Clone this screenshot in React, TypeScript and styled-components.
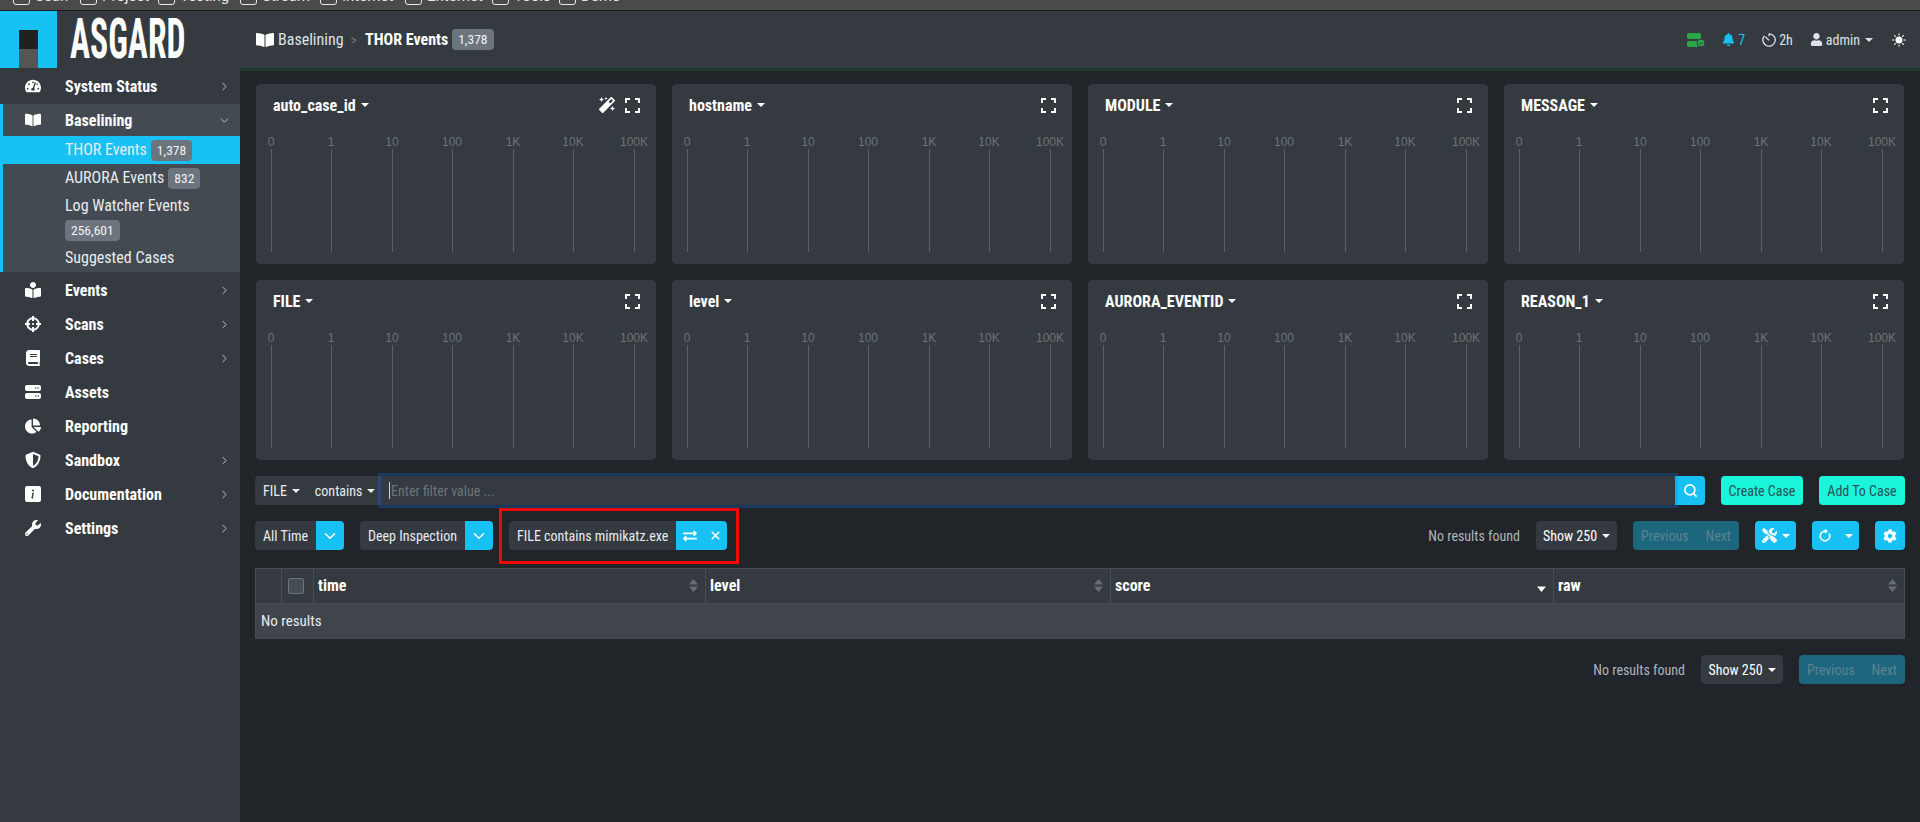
import React from "react";
import styled, {createGlobalStyle} from "styled-components";
import {
    FaBookOpen, FaBookReader, FaBell, FaBook, FaChartPie, FaCog, FaCrosshairs, FaExchangeAlt, FaMagic,
    FaShieldAlt, FaTachometerAlt, FaTools, FaUser, FaWrench,
} from "react-icons/fa";
import {FaServer} from "react-icons/fa6";
import {BsArrowClockwise, BsInfoSquareFill, BsSunFill} from "react-icons/bs";
import {FiChevronDown, FiChevronRight, FiSearch, FiX} from "react-icons/fi";

const GlobalStyle = createGlobalStyle`
    html, body { margin: 0; height: 100%; background: #212529; }
    body {
        font-family: "Roboto Condensed", "Roboto", "Liberation Sans", sans-serif;
        font-size: 16px;
        color: #dee2e6;
        overflow: hidden;
    }
    * { box-sizing: border-box; }
`;

const CYAN = '#17c1f4';
const PANEL = '#343a40';

const Shell = styled.div`
    display: flex;
    flex-direction: column;
    height: 822px;
`;

const TopStrip = styled.div`
    display: flex;
    height: 11px;
    flex-shrink: 0;
    padding-left: 13px;
    background: #4a4a4a;
    border-bottom: 1px solid #1c1c1c;
    overflow: hidden;
    color: #e8e8e8;
    font: 15px/16px "Roboto", sans-serif;
`;

const StripItem = styled.div<{$width: number}>`
    display: flex;
    gap: 5px;
    width: ${p => p.$width}px;
    margin-top: -12px;
    flex-shrink: 0;

    &::before {
        content: "";
        width: 15px;
        height: 15px;
        border: 1px solid #e8e8e8;
        border-radius: 3px;
    }
`;

const Frame = styled.div`
    display: flex;
    flex: 1;
    min-height: 0;
`;

const Sidebar = styled.aside`
    width: 240px;
    flex-shrink: 0;
    background: ${PANEL};
`;

const Brand = styled.div`
    display: flex;
    height: 57px;
    overflow: hidden;
`;

const LogoMark = styled.div`
    display: flex;
    flex-direction: column;
    justify-content: flex-end;
    align-items: center;
    width: 57px;
    flex-shrink: 0;
    background: ${CYAN};
`;

const LogoDark = styled.div`
    width: 19px;
    height: 19px;
    background: #212121;
`;

const LogoGrey = styled(LogoDark)`
    background: #555;
`;

const BrandName = styled.div`
    margin-left: 13px;
    color: #fff;
    font-size: 56px;
    line-height: 57px;
    font-weight: 700;
    transform: scaleX(0.6);
    transform-origin: left center;
`;

const NavRow = styled.div<{$open?: boolean; $first?: boolean}>`
    display: flex;
    align-items: center;
    height: ${p => p.$open ? 32 : p.$first ? 36 : 34}px;
    padding-left: ${p => p.$open ? 22 : 25}px;
    color: #fff;
    font-weight: 700;
`;

const NavIcon = styled.span`
    display: flex;
    justify-content: center;
    width: 16px;
    margin-right: 24px;
    font-size: 16px;
`;

const NavArrow = styled.span`
    display: flex;
    margin-left: auto;
    margin-right: 9px;
    color: #ced4da;
    font-size: 13px;

    svg { stroke-width: 1.6; }
`;

const NavGroup = styled.div`
    height: 168px;
    margin-bottom: 1px;
    background: #444a51;
    border-left: 3px solid ${CYAN};
`;

const SubItem = styled.div<{$active?: boolean; $stacked?: boolean}>`
    display: flex;
    flex-wrap: wrap;
    align-items: center;
    align-content: flex-start;
    column-gap: 4px;
    min-height: 28px;
    margin-left: ${p => p.$active ? -3 : 0}px;
    padding-left: ${p => p.$active ? 65 : 62}px;
    padding-bottom: ${p => p.$stacked ? 3 : 0}px;
    background: ${p => p.$active ? CYAN : 'transparent'};
    color: #e9ecef;
    line-height: 28px;
`;

const Badge = styled.span`
    display: inline-block;
    padding: 0 6px;
    height: 21px;
    background: #6c757d;
    border-radius: 4px;
    color: #f1f3f5;
    font-size: 13.5px;
    line-height: 21px;
`;

const Content = styled.div`
    flex: 1;
    min-width: 0;
`;

const Header = styled.header`
    display: flex;
    align-items: center;
    height: 60px;
    padding: 0 14px 0 16px;
    background: ${PANEL};
    border-bottom: 3px solid #1d3a2a;
`;

const Crumb = styled.span`
    display: flex;
    align-items: center;
    gap: 4px;
    color: #dee2e6;

    svg { font-size: 18px; color: #fff; }
`;

const CrumbSep = styled.span`
    margin: 0 8px 0 7px;
    color: #6c757d;
    font-size: 14px;
`;

const CrumbCurrent = styled.span`
    margin-right: 4px;
    color: #fff;
    font-weight: 700;
`;

const Status = styled.div`
    display: flex;
    align-items: center;
    margin-left: auto;
    font-size: 14px;
`;

const StatusItem = styled.span<{$color?: string; $gap: number}>`
    display: flex;
    align-items: center;
    gap: 3px;
    margin-right: ${p => p.$gap}px;
    color: ${p => p.$color || '#dee2e6'};
`;

const StatusLabel = styled.span`
    display: inline-flex;
    align-items: center;
`;

const Main = styled.main`
    padding: 13px 15px 0;
`;

const CardGrid = styled.div`
    display: grid;
    grid-template-columns: repeat(4, 400px);
    gap: 16px;
    margin: 0 1px;
`;

const Card = styled.section`
    height: 180px;
    background: ${PANEL};
    border-radius: 4px;
`;

const CardHead = styled.div`
    display: flex;
    align-items: center;
    gap: 10px;
    height: 42px;
    padding: 0 16px 0 17px;
    color: #fff;
    font-weight: 700;
`;

const CardTitle = styled.span`
    display: flex;
    align-items: center;
    margin-right: auto;
`;

const Caret = styled.span`
    display: inline-block;
    margin-left: 5px;
    border-top: 4.5px solid currentColor;
    border-left: 4.5px solid transparent;
    border-right: 4.5px solid transparent;
`;

const Chart = styled.svg`
    display: block;
    width: 400px;
    height: 138px;
`;

const FilterBar = styled.div`
    display: flex;
    align-items: stretch;
    height: 29px;
    margin-top: 16px;
    font-size: 14px;
`;

const FieldPicker = styled.div`
    display: flex;
    align-items: center;
    gap: 15px;
    width: 126px;
    padding-left: 8px;
    background: ${PANEL};
    border-radius: 4px 0 0 4px;
`;

const PickerLabel = styled.span`
    display: flex;
    align-items: center;
    color: #e9ecef;
`;

const FilterInputWrap = styled.div`
    display: flex;
    align-items: center;
    flex: 1;
    padding-left: 8px;
    background: ${PANEL};
    box-shadow: 0 0 0 3px rgba(0, 123, 255, .25);
    position: relative;
    z-index: 1;
`;

const FilterInput = styled.input`
    width: 100%;
    height: 17px;
    padding: 0 0 0 1px;
    background: transparent;
    border: 0;
    border-left: 1px solid #ced4da;
    outline: none;
    color: #dee2e6;
    font: inherit;

    &::placeholder { color: #6c757d; }
`;

const Button = styled.button<{$width?: number; $bg?: string; $color?: string; $left?: number; $round?: string; $gap?: number}>`
    display: inline-flex;
    align-items: center;
    justify-content: center;
    gap: ${p => p.$gap || 0}px;
    width: ${p => p.$width ? `${p.$width}px` : 'auto'};
    height: 29px;
    margin-left: ${p => p.$left || 0}px;
    padding: 0;
    background: ${p => p.$bg || CYAN};
    border: 0;
    border-radius: ${p => p.$round || '4px'};
    color: ${p => p.$color || '#fff'};
    font: inherit;
    flex-shrink: 0;
`;

const ToolRow = styled.div`
    display: flex;
    align-items: center;
    height: 29px;
    margin-top: 16px;
    font-size: 14px;
`;

const Tag = styled.div<{$left?: number}>`
    display: flex;
    height: 29px;
    margin-left: ${p => p.$left || 0}px;
    position: relative;
`;

const TagLabel = styled.span<{$width: number}>`
    display: flex;
    align-items: center;
    width: ${p => p.$width}px;
    padding-left: 8px;
    background: ${PANEL};
    border-radius: 4px 0 0 4px;
    color: #e9ecef;
    white-space: nowrap;
`;

const Highlight = styled.div`
    position: absolute;
    left: -10px;
    right: -12px;
    top: -13px;
    bottom: -14px;
    border: 3px solid #f00a0a;
    pointer-events: none;
`;

const Pager = styled.div`
    display: flex;
    align-items: center;
    margin-left: auto;
`;

const ResultText = styled.span`
    margin-right: 16px;
    color: #adb5bd;
`;

const PageNav = styled.div`
    display: flex;
    align-items: center;
    justify-content: space-between;
    width: 106px;
    height: 29px;
    margin-left: 16px;
    padding: 0 8px;
    background: #1c677e;
    border-radius: 4px;
    color: #5d8290;
`;

const Table = styled.div`
    margin-top: 18px;
    border: 1px solid #474c53;
`;

const HeadRow = styled.div`
    display: grid;
    grid-template-columns: 25px 32px 392px 405px 443px 1fr;
    height: 35px;
    background: ${PANEL};
    border-bottom: 1px solid #474c53;
`;

const HeadCell = styled.div`
    display: flex;
    align-items: center;
    padding: 0 4px 1px;
    color: #fff;
    font-weight: 700;

    & + & { border-left: 1px solid #474c53; }
`;

const CheckCell = styled(HeadCell)`
    justify-content: center;
    padding: 0 4px 0 0;
`;

const CheckBox = styled.span`
    width: 16px;
    height: 16px;
    background: #484d54;
    border: 1px solid #6c757d;
    border-radius: 2px;
`;

const SortMark = styled.svg`
    width: 9px;
    height: 13px;
    margin-left: auto;
    margin-right: 3px;
`;

const EmptyRow = styled.div`
    display: flex;
    align-items: center;
    height: 34px;
    padding-left: 5px;
    background: #40454c;
    color: #e9ecef;
    font-size: 15px;
`;

const Expand = () => (
    <svg width="15" height="15" viewBox="0 0 15 15" fill="none" stroke="#fff" strokeWidth="2">
        <path d="M1 5V1h4M10 1h4v4M14 10v4h-4M5 14H1v-4"/>
    </svg>
);

const ServerOk = () => (
    <svg width="18" height="14" viewBox="0 0 18 14">
        <rect x="0" y="0" width="14" height="6" rx="1.5" fill="#28a745"/>
        <rect x="0" y="8" width="12" height="6" rx="1.5" fill="#28a745"/>
        <circle cx="14" cy="10" r="4" fill="#28a745" stroke={PANEL} strokeWidth="1"/>
        <path d="M12.2 10l1.3 1.3 2.3-2.4" fill="none" stroke={PANEL} strokeWidth="1"/>
    </svg>
);

const Timer = () => (
    <svg width="14" height="14" viewBox="0 0 14 14" fill="none" stroke="#e9ecef" strokeWidth="1.2">
        <path d="M7 .8a6.2 6.2 0 1 1-4.6 2.1"/>
        <path d="M3.2 3.6L7 7.4"/>
        <path d="M7 .8v2.4"/>
    </svg>
);

const Sort = ({active}: {active?: boolean}) => (
    <SortMark viewBox="0 0 9 13">
        {!active && <path d="M4.5 0L9 5.5H0z" fill="#666c73"/>}
        <path d="M0 7.5h9L4.5 13z" fill={active ? '#fff' : '#666c73'}/>
    </SortMark>
);

const upperNav = {label: 'System Status', icon: <FaTachometerAlt/>};

const lowerNav = [
    {label: 'Events', icon: <FaBookReader/>, arrow: true},
    {label: 'Scans', icon: <FaCrosshairs/>, arrow: true},
    {label: 'Cases', icon: <FaBook/>, arrow: true},
    {label: 'Assets', icon: <FaServer/>},
    {label: 'Reporting', icon: <FaChartPie/>},
    {label: 'Sandbox', icon: <FaShieldAlt/>, arrow: true},
    {label: 'Documentation', icon: <BsInfoSquareFill/>, arrow: true},
    {label: 'Settings', icon: <FaWrench/>, arrow: true},
];

const stripItems = [
    {label: 'Scan', width: 67},
    {label: 'Project', width: 78},
    {label: 'Testing', width: 82},
    {label: 'Stream', width: 80},
    {label: 'Internet', width: 85},
    {label: 'Enternet', width: 87},
    {label: 'Tools', width: 67},
    {label: 'Demo', width: 70},
];

const ticks = [
    {label: '0', x: 15},
    {label: '1', x: 75},
    {label: '10', x: 136},
    {label: '100', x: 196},
    {label: '1K', x: 257},
    {label: '10K', x: 317},
    {label: '100K', x: 378},
];

const cards = ['auto_case_id', 'hostname', 'MODULE', 'MESSAGE', 'FILE', 'level', 'AURORA_EVENTID', 'REASON_1'];

const App = () => {
    return (
        <Shell>
            <GlobalStyle/>
            <TopStrip>
                {stripItems.map(item => (
                    <StripItem key={item.label} $width={item.width}>{item.label}</StripItem>
                ))}
            </TopStrip>
            <Frame>
                <Sidebar>
                    <Brand>
                        <LogoMark>
                            <LogoDark/>
                            <LogoGrey/>
                        </LogoMark>
                        <BrandName>ASGARD</BrandName>
                    </Brand>
                    <NavRow $first>
                        <NavIcon>{upperNav.icon}</NavIcon>
                        {upperNav.label}
                        <NavArrow><FiChevronRight/></NavArrow>
                    </NavRow>
                    <NavGroup>
                        <NavRow $open>
                            <NavIcon><FaBookOpen/></NavIcon>
                            Baselining
                            <NavArrow><FiChevronDown/></NavArrow>
                        </NavRow>
                        <SubItem $active>THOR Events <Badge>1,378</Badge></SubItem>
                        <SubItem>AURORA Events <Badge>832</Badge></SubItem>
                        <SubItem $stacked>Log Watcher Events <Badge>256,601</Badge></SubItem>
                        <SubItem>Suggested Cases</SubItem>
                    </NavGroup>
                    {lowerNav.map(item => (
                        <NavRow key={item.label}>
                            <NavIcon>{item.icon}</NavIcon>
                            {item.label}
                            {item.arrow && <NavArrow><FiChevronRight/></NavArrow>}
                        </NavRow>
                    ))}
                </Sidebar>
                <Content>
                    <Header>
                        <Crumb><FaBookOpen/>Baselining</Crumb>
                        <CrumbSep>&gt;</CrumbSep>
                        <CrumbCurrent>THOR Events</CrumbCurrent>
                        <Badge>1,378</Badge>
                        <Status>
                            <StatusItem $gap={17}><ServerOk/></StatusItem>
                            <StatusItem $color={CYAN} $gap={17}><FaBell size={13}/>7</StatusItem>
                            <StatusItem $gap={17}><Timer/>2h</StatusItem>
                            <StatusItem $gap={19}><FaUser size={13}/><StatusLabel>admin<Caret/></StatusLabel></StatusItem>
                            <StatusItem $gap={0}><BsSunFill size={14} color="#fff"/></StatusItem>
                        </Status>
                    </Header>
                    <Main>
                        <CardGrid>
                            {cards.map((title, i) => (
                                <Card key={title}>
                                    <CardHead>
                                        <CardTitle>{title}<Caret/></CardTitle>
                                        {i === 0 && <FaMagic size={16}/>}
                                        <Expand/>
                                    </CardHead>
                                    <Chart viewBox="0 0 400 138">
                                        {ticks.map(t => (
                                            <g key={t.label}>
                                                <text x={t.x} y={20} textAnchor="middle" fontSize="12"
                                                      fontFamily="Liberation Sans, sans-serif" fill="#6e7277">{t.label}</text>
                                                <line x1={t.x + 0.5} x2={t.x + 0.5} y1={23} y2={126} stroke="#5c6065"/>
                                            </g>
                                        ))}
                                    </Chart>
                                </Card>
                            ))}
                        </CardGrid>

                        <FilterBar>
                            <FieldPicker>
                                <PickerLabel>FILE<Caret/></PickerLabel>
                                <PickerLabel>contains<Caret/></PickerLabel>
                            </FieldPicker>
                            <FilterInputWrap>
                                <FilterInput placeholder="Enter filter value ..."/>
                            </FilterInputWrap>
                            <Button $width={30} $round="0 4px 4px 0"><FiSearch size={15} strokeWidth={2.5}/></Button>
                            <Button $width={82} $left={16} $bg="#1bf5d9" $color="#2c4f57">Create Case</Button>
                            <Button $width={86} $left={16} $bg="#1bf5d9" $color="#2c4f57">Add To Case</Button>
                        </FilterBar>

                        <ToolRow>
                            <Tag>
                                <TagLabel $width={61}>All Time</TagLabel>
                                <Button $width={28} $round="0 4px 4px 0"><FiChevronDown size={18}/></Button>
                            </Tag>
                            <Tag $left={16}>
                                <TagLabel $width={105}>Deep Inspection</TagLabel>
                                <Button $width={28} $round="0 4px 4px 0"><FiChevronDown size={18}/></Button>
                            </Tag>
                            <Tag $left={16}>
                                <TagLabel $width={167}>FILE contains mimikatz.exe</TagLabel>
                                <Button $width={28} $round="0"><FaExchangeAlt size={14}/></Button>
                                <Button $width={23} $round="0 4px 4px 0"><FiX size={13} strokeWidth={3}/></Button>
                                <Highlight/>
                            </Tag>
                            <Pager>
                                <ResultText>No results found</ResultText>
                                <Button $width={81} $bg={PANEL} $color="#fff">Show 250<Caret/></Button>
                                <PageNav><span>Previous</span><span>Next</span></PageNav>
                                <Button $width={41} $left={16}><FaTools size={15}/><Caret/></Button>
                                <Button $width={47} $left={16} $gap={8}>
                                    <BsArrowClockwise size={14} stroke="currentColor" strokeWidth={0.8}/><Caret/>
                                </Button>
                                <Button $width={30} $left={16}><FaCog size={14}/></Button>
                            </Pager>
                        </ToolRow>

                        <Table>
                            <HeadRow>
                                <HeadCell/>
                                <CheckCell><CheckBox/></CheckCell>
                                <HeadCell>time<Sort/></HeadCell>
                                <HeadCell>level<Sort/></HeadCell>
                                <HeadCell>score<Sort active/></HeadCell>
                                <HeadCell>raw<Sort/></HeadCell>
                            </HeadRow>
                            <EmptyRow>No results</EmptyRow>
                        </Table>

                        <ToolRow>
                            <Pager>
                                <ResultText>No results found</ResultText>
                                <Button $width={82} $bg={PANEL} $color="#fff">Show 250<Caret/></Button>
                                <PageNav><span>Previous</span><span>Next</span></PageNav>
                            </Pager>
                        </ToolRow>
                    </Main>
                </Content>
            </Frame>
        </Shell>
    )
}

export default App
